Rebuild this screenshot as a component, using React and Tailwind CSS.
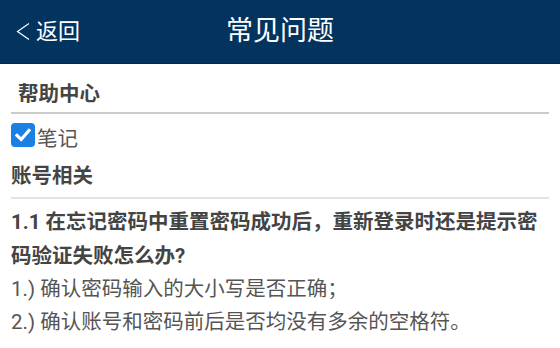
export default function App() {
  const font = { fontFamily: 'Roboto, "Noto Sans CJK SC", sans-serif' };
  return (
    <div className="w-[560px] h-[348px] bg-white overflow-hidden" style={font}>
      {/* Header */}
      <div className="relative h-[64px] bg-[#03335f] border-b border-[#0d2540] flex items-center justify-center">
        <div className="absolute left-[16px] top-0 h-[63px] flex items-center gap-[6px]">
          <svg width="14" height="17" viewBox="0 0 14 17" className="mt-[-1px]">
            <polyline points="13,0.5 1.5,8.5 13,16.5" fill="none" stroke="#fff" strokeWidth="1.2" />
          </svg>
          <span className="text-white text-[22px] leading-[24px]">返回</span>
        </div>
        <span className="text-white text-[27px] leading-[30px] -mt-[1px]">常见问题</span>
      </div>

      {/* 帮助中心 */}
      <div className="pl-[18px] pt-[18px] pb-[6px] text-[20.5px] leading-[24px] font-bold text-[#444]">帮助中心</div>
      <div className="mx-[11px] h-[2px] bg-[#cccccc]" />

      {/* checkbox */}
      <div className="pl-[11px] pt-[9px] flex items-start">
        <span className="w-[24px] h-[24px] rounded-[4px] bg-[#1b7fe3] flex items-center justify-center">
          <svg width="18" height="18" viewBox="0 0 18 18">
            <polyline points="3,9.5 7.2,13.5 15,4.5" fill="none" stroke="#fff" strokeWidth="3.2" strokeLinecap="square" />
          </svg>
        </span>
        <span className="ml-[2px] mt-[4px] text-[20.5px] leading-[24px] text-[#555]">笔记</span>
      </div>

      {/* 账号相关 */}
      <div className="pl-[11px] pt-[13px] pb-[9px] text-[20.5px] leading-[24px] font-bold text-[#444]">账号相关</div>
      <div className="mx-[11px] h-[2px] bg-[#e2e2e2]" />

      {/* Q&A */}
      <div className="px-[11px] pt-[6px]">
        <p className="text-[20.5px] leading-[34px] font-bold text-[#444]">1.1 在忘记密码中重置密码成功后，重新登录时还是提示密码验证失败怎么办?</p>
        <p className="text-[20.5px] leading-[33px] text-[#555]">1.) 确认密码输入的大小写是否正确；</p>
        <p className="text-[20.5px] leading-[33px] text-[#555]">2.) 确认账号和密码前后是否均没有多余的空格符。</p>
      </div>
    </div>
  );
}
